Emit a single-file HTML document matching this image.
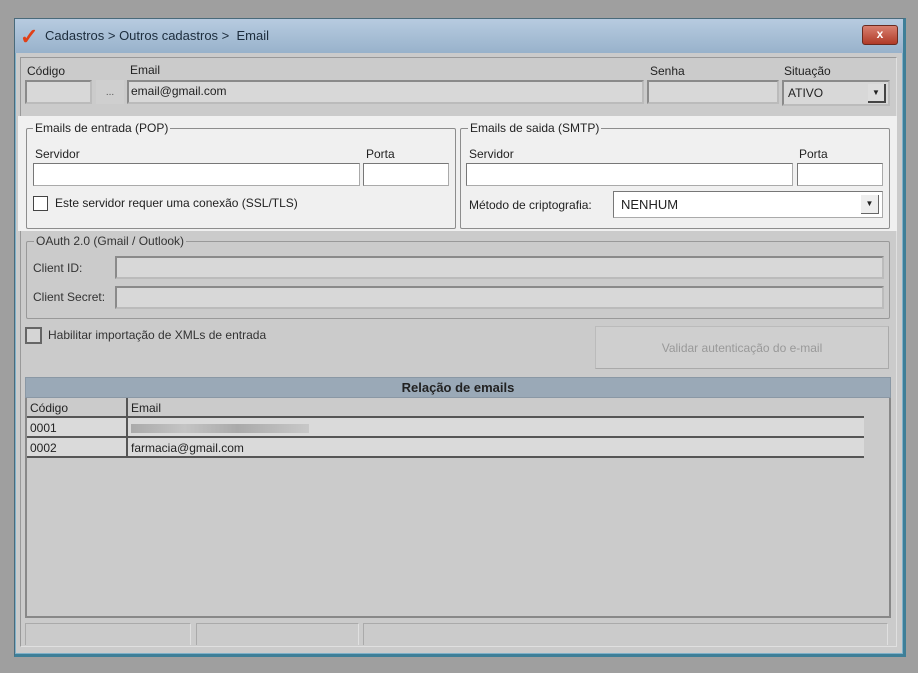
<!DOCTYPE html>
<html><head><meta charset="utf-8"><style>
*{box-sizing:border-box;margin:0;padding:0}
body{width:918px;height:673px;background:#9f9f9f;position:relative;overflow:hidden;font-family:"Liberation Sans",sans-serif;font-size:12px;color:#222}
.a{position:absolute}
.win{left:14px;top:18px;width:892px;height:639px;background:#cbcbcb;border:1px solid #4a6a7a;box-shadow:inset 0 0 0 1px #7fb0c8;border-bottom:3px solid #3e7f98;border-right:3px solid #3e7f98}
.tb{left:15px;top:19px;width:888px;height:34px;background:linear-gradient(#b7cbe0,#98b2cb)}
.in{background:#d8d8d8;border:2px solid #8a8a8a;border-right-color:#bbb;border-bottom-color:#bbb}
.w{background:#fff;border:1px solid #777;border-right-color:#aaa;border-bottom-color:#aaa}
.grp{border:1px solid #8d8d8d;border-radius:2px}
.lg{background:inherit;padding:0 2px}
.t{font-size:12px;white-space:nowrap}
</style></head><body>
<div class="a win"></div>
<div class="a tb"></div>
<div class="a" style="left:20px;top:24px;font-size:22px;color:#e04018;font-weight:bold">✓</div>
<div class="a t" style="left:45px;top:28px;font-size:13px;color:#1c2c3c">Cadastros &gt; Outros cadastros &gt;&nbsp; Email</div>
<div class="a" style="left:862px;top:25px;width:36px;height:20px;background:linear-gradient(#d88070,#b03a28);border:1px solid #6a2a20;border-radius:3px;color:#fff;text-align:center;font-weight:bold;line-height:17px">x</div>
<div class="a" style="left:20px;top:57px;width:877px;height:590px;border:1px solid #999;border-right-color:#e0e0e0;border-bottom-color:#e0e0e0"></div>

<div class="a t" style="left:27px;top:64px">Código</div>
<div class="a t" style="left:130px;top:63px">Email</div>
<div class="a t" style="left:650px;top:64px">Senha</div>
<div class="a t" style="left:784px;top:64px">Situação</div>
<div class="a in" style="left:25px;top:80px;width:67px;height:24px"></div>
<div class="a" style="left:96px;top:80px;width:28px;height:24px;background:#cfcfcf;text-align:center;font-size:10px;line-height:26px;color:#555">...</div>
<div class="a in t" style="left:127px;top:80px;width:517px;height:24px;padding:2px 2px">email@gmail.com</div>
<div class="a in" style="left:647px;top:80px;width:132px;height:24px"></div>
<div class="a in t" style="left:782px;top:80px;width:108px;height:26px;padding:4px 4px">ATIVO</div>
<div class="a" style="left:868px;top:84px;width:18px;height:19px;background:#ddd;border-right:2px solid #444;border-bottom:2px solid #444;font-size:8px;text-align:center;line-height:18px">▼</div>

<div class="a" style="left:18px;top:116px;width:879px;height:115px;background:#f0f0f0"></div>
<div class="a grp" style="left:26px;top:128px;width:430px;height:101px"></div>
<div class="a t" style="left:33px;top:121px;background:#f0f0f0;padding:0 2px">Emails de entrada (POP)</div>
<div class="a t" style="left:35px;top:147px">Servidor</div>
<div class="a t" style="left:366px;top:147px">Porta</div>
<div class="a w" style="left:33px;top:163px;width:327px;height:23px"></div>
<div class="a w" style="left:363px;top:163px;width:86px;height:23px"></div>
<div class="a" style="left:33px;top:196px;width:15px;height:15px;background:#fff;border:1px solid #444"></div>
<div class="a t" style="left:55px;top:196px">Este servidor requer uma conexão (SSL/TLS)</div>

<div class="a grp" style="left:460px;top:128px;width:430px;height:101px"></div>
<div class="a t" style="left:468px;top:121px;background:#f0f0f0;padding:0 2px">Emails de saida (SMTP)</div>
<div class="a t" style="left:469px;top:147px">Servidor</div>
<div class="a t" style="left:799px;top:147px">Porta</div>
<div class="a w" style="left:466px;top:163px;width:327px;height:23px"></div>
<div class="a w" style="left:797px;top:163px;width:86px;height:23px"></div>
<div class="a t" style="left:469px;top:198px">Método de criptografia:</div>
<div class="a w t" style="left:613px;top:191px;width:270px;height:27px;padding:5px 7px;font-size:13px">NENHUM</div>
<div class="a" style="left:861px;top:195px;width:18px;height:19px;background:#eee;border-right:1px solid #666;border-bottom:1px solid #666;font-size:8px;text-align:center;line-height:18px">▼</div>

<div class="a grp" style="left:26px;top:241px;width:864px;height:78px;border-color:#999"></div>
<div class="a t" style="left:34px;top:234px;background:#cbcbcb;padding:0 2px;color:#333">OAuth 2.0 (Gmail / Outlook)</div>
<div class="a t" style="left:33px;top:261px;color:#333">Client ID:</div>
<div class="a t" style="left:33px;top:290px;color:#333">Client Secret:</div>
<div class="a in" style="left:115px;top:256px;width:769px;height:23px"></div>
<div class="a in" style="left:115px;top:286px;width:769px;height:23px"></div>

<div class="a" style="left:25px;top:327px;width:17px;height:17px;border:2px solid #666;background:#d5d5d5"></div>
<div class="a t" style="left:48px;top:328px;color:#333">Habilitar importação de XMLs de entrada</div>
<div class="a t" style="left:595px;top:326px;width:294px;height:43px;border:1px solid #bbb;border-right-color:#aaa;border-bottom-color:#aaa;background:#cfcfcf;color:#999;text-align:center;line-height:43px">Validar autenticação do e-mail</div>

<div class="a" style="left:25px;top:377px;width:866px;height:241px;border:2px solid #888;border-top:none"></div>
<div class="a t" style="left:25px;top:377px;width:866px;height:21px;background:#9aa9b7;text-align:center;font-weight:bold;font-size:13px;line-height:20px;border:1px solid #8a98a5">Relação de emails</div>
<div class="a" style="left:27px;top:398px;width:837px;height:60px;border-right:2px solid #555"></div>
<div class="a" style="left:27px;top:398px;width:837px;height:20px;background:#cbcbcb;border-bottom:2px solid #555"></div>
<div class="a" style="left:27px;top:418px;width:837px;height:20px;background:#dadada;border-bottom:2px solid #555"></div>
<div class="a" style="left:27px;top:438px;width:837px;height:20px;background:#dadada;border-bottom:2px solid #555"></div>
<div class="a" style="left:126px;top:398px;width:2px;height:60px;background:#555"></div>
<div class="a t" style="left:30px;top:401px">Código</div>
<div class="a t" style="left:131px;top:401px">Email</div>
<div class="a t" style="left:30px;top:421px">0001</div>
<div class="a" style="left:131px;top:424px;width:178px;height:9px;background:linear-gradient(90deg,#aaa,#c4c4c4 30%,#aaa 60%,#c8c8c8)"></div>
<div class="a t" style="left:30px;top:441px">0002</div>
<div class="a t" style="left:131px;top:441px">farmacia@gmail.com</div>

<div class="a" style="left:25px;top:623px;width:166px;height:22px;border:1px solid #aaa;border-right-color:#e0e0e0;border-bottom:none"></div>
<div class="a" style="left:196px;top:623px;width:163px;height:22px;border:1px solid #aaa;border-right-color:#e0e0e0;border-bottom:none"></div>
<div class="a" style="left:363px;top:623px;width:525px;height:22px;border:1px solid #aaa;border-right-color:#e0e0e0;border-bottom:none"></div>
</body></html>
